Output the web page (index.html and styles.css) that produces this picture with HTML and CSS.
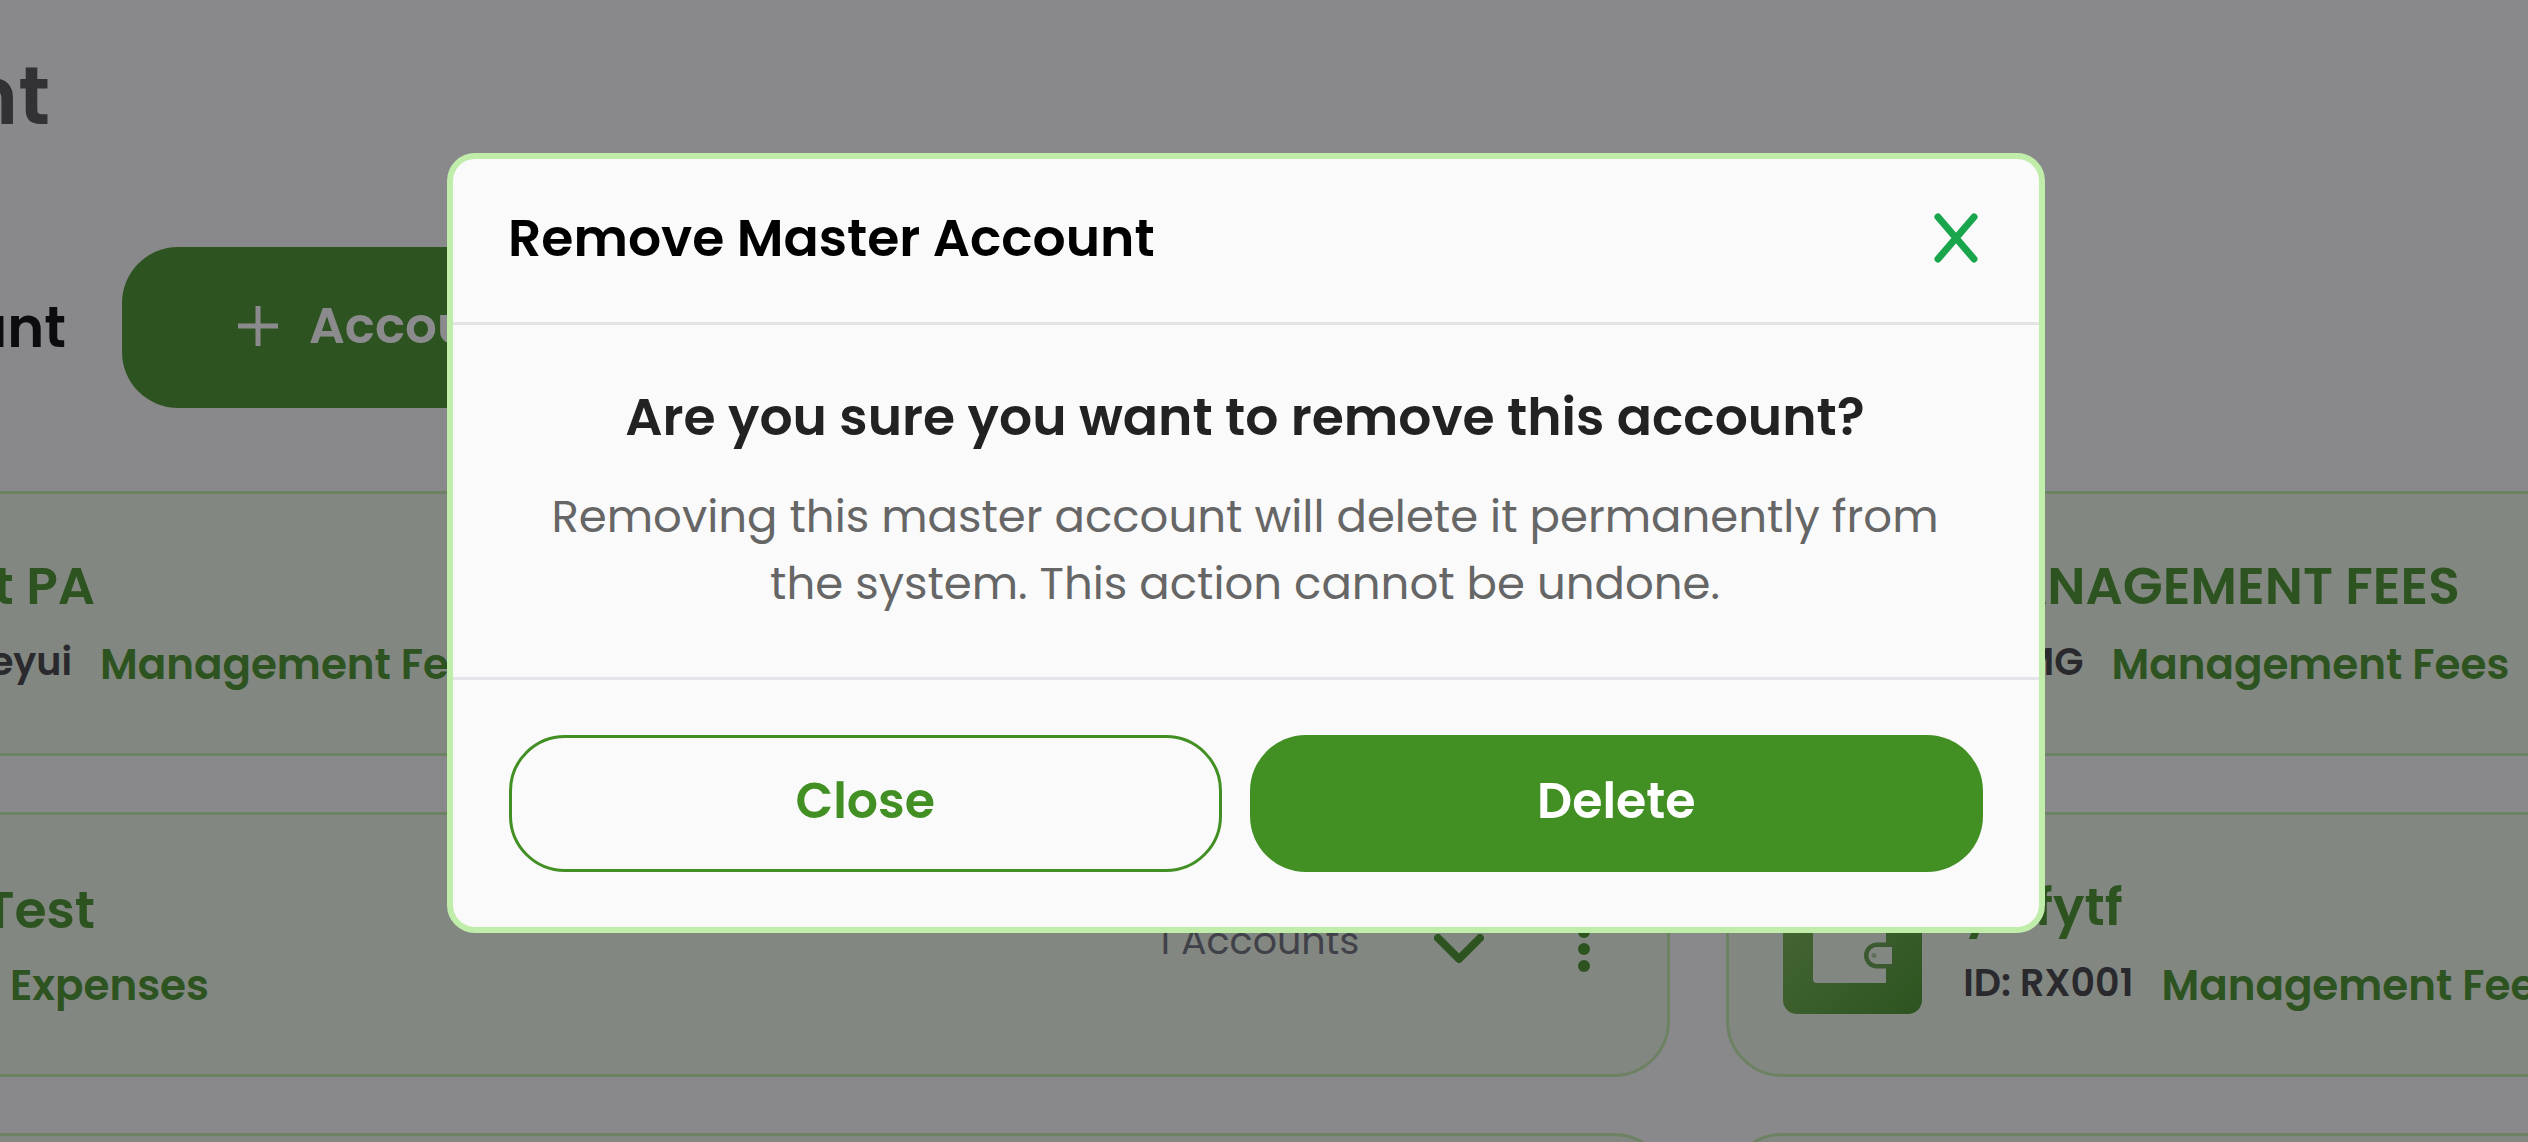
FILE: index.html
```html
<!DOCTYPE html>
<html lang="en">
<head>
<meta charset="utf-8">
<meta name="viewport" content="width=device-width, initial-scale=1">
<title>Master Accounts</title>
<link rel="stylesheet" href="styles.css">
</head>
<body>
<main class="page">
  <h1 class="page-title">nt</h1>
  <div class="toolbar">
    <span class="toolbar-label">unt</span>
    <button class="add-button" type="button">
      <svg class="plus" viewBox="0 0 40 40" aria-hidden="true"><path d="M20 0v40M0 20h40"/></svg>
      Account
    </button>
  </div>
  <div class="accounts">
    <article class="card card-left">
      <div class="info lead">
        <h2 class="name">t PA</h2>
        <div class="meta"><span class="id">eyui</span><span class="tag">Management Fees</span></div>
      </div>
    </article>
    <article class="card card-right">
      <div class="wallet"></div>
      <div class="info">
        <h2 class="name">MANAGEMENT FEES</h2>
        <div class="meta"><span class="id">ID: MG</span><span class="tag">Management Fees</span></div>
      </div>
    </article>
    <article class="card card-left">
      <div class="info lead">
        <h2 class="name">Test</h2>
        <div class="meta"><span class="tag">Expenses</span></div>
      </div>
      <span class="count">1 Accounts</span>
      <button class="icon-button" type="button" aria-label="Expand">
        <svg class="chevron" viewBox="0 0 50 30" aria-hidden="true"><path d="M4 4l21 21L46 4"/></svg>
      </button>
      <button class="icon-button" type="button" aria-label="More">
        <svg class="dots" viewBox="0 0 12 46" aria-hidden="true"><circle cx="6" cy="6" r="6"/><circle cx="6" cy="23" r="6"/><circle cx="6" cy="40" r="6"/></svg>
      </button>
    </article>
    <article class="card card-right">
      <div class="wallet">
        <svg viewBox="0 0 139 139" aria-hidden="true">
          <path class="paper" d="M30 40q0-10 10-10h63v78H34q-4 0-4-4z"/>
          <path class="rim" d="M109 70H94a10.500 10.500 0 0 0 0 21h15"/>
          <path class="clasp" d="M109 72H94a8.500 8.500 0 0 0 0 17h15z"/>
          <circle class="stud" cx="91" cy="80.500" r="2.500"/>
        </svg>
      </div>
      <div class="info">
        <h2 class="name">yttfytf</h2>
        <div class="meta"><span class="id">ID: RX001</span><span class="tag">Management Fees</span></div>
      </div>
    </article>
    <article class="card card-left"></article>
    <article class="card card-right"></article>
  </div>
</main>

<div class="overlay">
  <section class="modal" role="dialog" aria-modal="true" aria-labelledby="modal-title">
    <header class="modal-header">
      <h2 class="modal-title" id="modal-title">Remove Master Account</h2>
      <button class="icon-button" type="button" aria-label="Close dialog">
        <svg class="cross" viewBox="0 0 44 50" aria-hidden="true"><path d="M4 4l36 42M40 4L4 46"/></svg>
      </button>
    </header>
    <div class="modal-body">
      <h3 class="question">Are you sure you want to remove this account?</h3>
      <p class="detail">Removing this master account will delete it permanently from<br>the system. This action cannot be undone.</p>
    </div>
    <footer class="modal-footer">
      <button class="action action-close" type="button">Close</button>
      <button class="action action-delete" type="button">Delete</button>
    </footer>
  </section>
</div>
</body>
</html>
```

FILE: styles.css
```css
* { box-sizing: border-box; }

body {
  margin: 0;
  height: 100vh;
  overflow: hidden;
  background: #fafafa;
  color: #000;
  font-family: Poppins, Inter, "Liberation Sans", sans-serif;
}

h1, h2, h3, p { margin: 0; }

button {
  margin: 0;
  padding: 0;
  border: 0;
  background: none;
  font: inherit;
  cursor: pointer;
}

svg { display: block; fill: none; stroke-linecap: round; stroke-linejoin: round; }

/* Page behind the dialog */
.page { height: 100vh; padding-top: 36px; overflow: hidden; }

.page-title {
  display: flex;
  justify-content: flex-end;
  width: 50px;
  color: #4c4c4e;
  font-size: 82px;
  font-weight: 600;
  line-height: 120px;
}

.toolbar { display: flex; align-items: center; margin-top: 91px; }

.toolbar-label {
  display: flex;
  justify-content: flex-end;
  width: 66px;
  margin-right: 56px;
  font-size: 56px;
  font-weight: 600;
}

.add-button {
  display: flex;
  align-items: center;
  gap: 31px;
  height: 161px;
  padding: 0 116px 4px;
  border-radius: 56px;
  background: #429024;
  color: #fff;
  font-size: 50px;
  font-weight: 600;
}

.plus { width: 40px; height: 40px; stroke: #fff; stroke-width: 5; }

.accounts {
  display: grid;
  grid-template-columns: minmax(0, 25fr) minmax(0, 12fr);
  gap: 56px;
  margin-top: 83px;
}

.card {
  display: flex;
  align-items: center;
  height: 265px;
  padding: 0 54px;
  border: 3px solid #c0ecab;
  border-radius: 56px;
  background: #edf7e6;
  white-space: nowrap;
}

.card-left { margin-left: -60px; padding-left: 57px; }
.card-right { gap: 41px; margin-right: -240px; }

.info { padding-top: 6px; }
.lead { flex: 1; }
.lead .name { display: flex; justify-content: flex-end; width: 95px; }
.lead .id { display: flex; justify-content: flex-end; width: 72px; }
.lead .tag:first-child { margin-left: 10px; }

.name { color: #429024; font-size: 52px; font-weight: 600; line-height: 76px; }

.meta { display: flex; align-items: center; gap: 28px; line-height: 76px; }
.id { padding-bottom: 6px; color: #3b3b40; font-size: 38px; font-weight: 600; }
.tag { color: #429024; font-size: 42px; font-weight: 600; }

.count { padding-bottom: 8px; color: #6b6b78; font-size: 38px; }

.icon-button { display: flex; align-items: center; justify-content: center; }
.card .icon-button { padding-top: 8px; }

.chevron { width: 50px; height: 30px; margin: 0 94px 0 75px; stroke: #429024; stroke-width: 8; }
.dots { width: 12px; height: 46px; margin-right: 23px; fill: #429024; }

.wallet {
  flex: none;
  width: 139px;
  height: 139px;
  border-radius: 14px;
  background: linear-gradient(135deg, #7ab956, #429024);
}
.paper { fill: #edf7e6; }
.rim { stroke: #5c9a42; stroke-width: 5; }
.clasp { fill: #edf7e6; }
.stud { fill: #a9c79c; }

/* Dialog */
.overlay {
  position: fixed;
  inset: 0;
  padding: 153px 483px 0 447px;
  background: rgba(24, 24, 27, 0.5);
}

.modal {
  border: 6px solid #c1edab;
  border-radius: 28px;
  background: #fafafa;
}

.modal-header {
  display: flex;
  align-items: center;
  justify-content: space-between;
  height: 166px;
  padding: 0 61px 5px 55px;
  border-bottom: 3px solid #e4e4e4;
}

.modal-title { font-size: 52px; font-weight: 600; line-height: 78px; }

.cross { width: 44px; height: 50px; stroke: #18a54c; stroke-width: 7; }

.modal-body { padding: 52px 57px 60px 55px; text-align: center; }

.question { color: #222; font-size: 52px; font-weight: 600; line-height: 80px; }

.detail { margin-top: 26px; color: #666; font-size: 45px; line-height: 67px; }

.modal-footer {
  display: flex;
  gap: 28px;
  padding: 55px 56px;
  border-top: 3px solid #e4e4ea;
}

.action {
  flex: 1 1 713px;
  height: 137px;
  padding-bottom: 4px;
  border-radius: 56px;
  font-size: 49px;
  font-weight: 600;
}

.action-close { border: 3px solid #429024; color: #429024; }
.action-delete { flex-basis: 734px; background: #429024; color: #fff; }
```
